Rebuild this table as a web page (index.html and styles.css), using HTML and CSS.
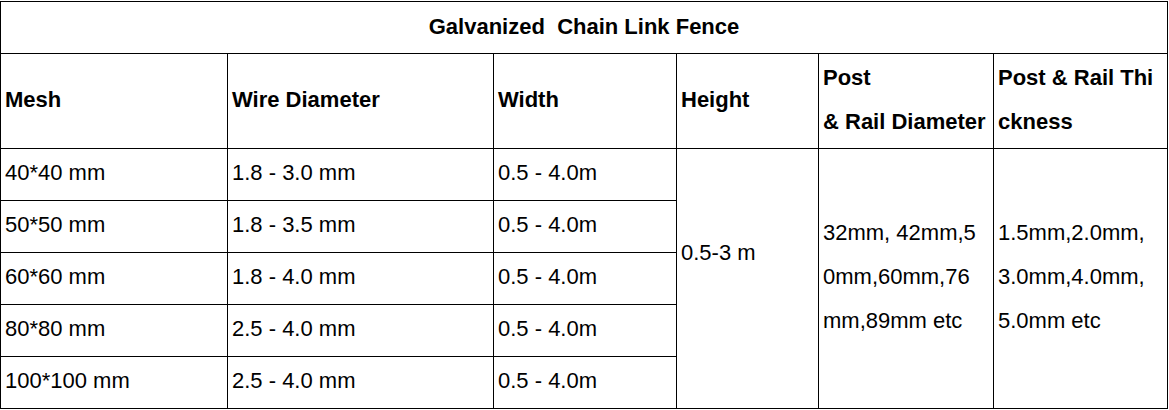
FILE: index.html
```html
<!DOCTYPE html>
<html>
<head>
<meta charset="utf-8">
<link rel="stylesheet" href="styles.css">
</head>
<body>
<table class="spec">
  <colgroup>
    <col class="c1"><col class="c2"><col class="c3"><col class="c4"><col class="c5"><col class="c6">
  </colgroup>
  <tr class="title-row">
    <td colspan="6" class="title">Galvanized&nbsp; Chain Link Fence</td>
  </tr>
  <tr class="head-row">
    <td class="bold">Mesh</td>
    <td class="bold">Wire Diameter</td>
    <td class="bold">Width</td>
    <td class="bold">Height</td>
    <td class="bold">Post<br>&amp; Rail Diameter</td>
    <td class="bold">Post &amp; Rail Thi<br>ckness</td>
  </tr>
  <tr class="data-row">
    <td>40*40 mm</td>
    <td>1.8 - 3.0 mm</td>
    <td>0.5 - 4.0m</td>
    <td rowspan="5" class="height-cell">0.5-3 m</td>
    <td rowspan="5" class="multi">32mm, 42mm,5<br>0mm,60mm,76<br>mm,89mm etc</td>
    <td rowspan="5" class="multi">1.5mm,2.0mm,<br>3.0mm,4.0mm,<br>5.0mm etc</td>
  </tr>
  <tr class="data-row">
    <td>50*50 mm</td>
    <td>1.8 - 3.5 mm</td>
    <td>0.5 - 4.0m</td>
  </tr>
  <tr class="data-row">
    <td>60*60 mm</td>
    <td>1.8 - 4.0 mm</td>
    <td>0.5 - 4.0m</td>
  </tr>
  <tr class="data-row">
    <td>80*80 mm</td>
    <td>2.5 - 4.0 mm</td>
    <td>0.5 - 4.0m</td>
  </tr>
  <tr class="data-row">
    <td>100*100 mm</td>
    <td>2.5 - 4.0 mm</td>
    <td>0.5 - 4.0m</td>
  </tr>
</table>
</body>
</html>
```
FILE: styles.css
```css
html, body {
  margin: 0;
  padding: 0;
  background: #ffffff;
}

body {
  padding-top: 1px;
}

.spec {
  border-collapse: collapse;
  table-layout: fixed;
  width: 1167px;
  font-family: "Liberation Sans", Arial, sans-serif;
  font-size: 22px;
  color: #000;
}

.c1 { width: 227px; }
.c2 { width: 266px; }
.c3 { width: 183px; }
.c4 { width: 142px; }
.c5 { width: 175px; }
.c6 { width: 174px; }

.spec td {
  border: 1px solid #000;
  padding: 0 4px 3px;
  vertical-align: middle;
  line-height: 44px;
  white-space: nowrap;
  overflow: hidden;
}

.title-row { height: 52px; }
.head-row { height: 95px; }
.data-row { height: 52px; }

.spec td.title {
  text-align: center;
  font-weight: bold;
  padding-bottom: 1px;
}

.spec td.bold {
  font-weight: bold;
  padding-bottom: 2px;
}

.spec td.height-cell {
  padding-bottom: 52px;
}
```
